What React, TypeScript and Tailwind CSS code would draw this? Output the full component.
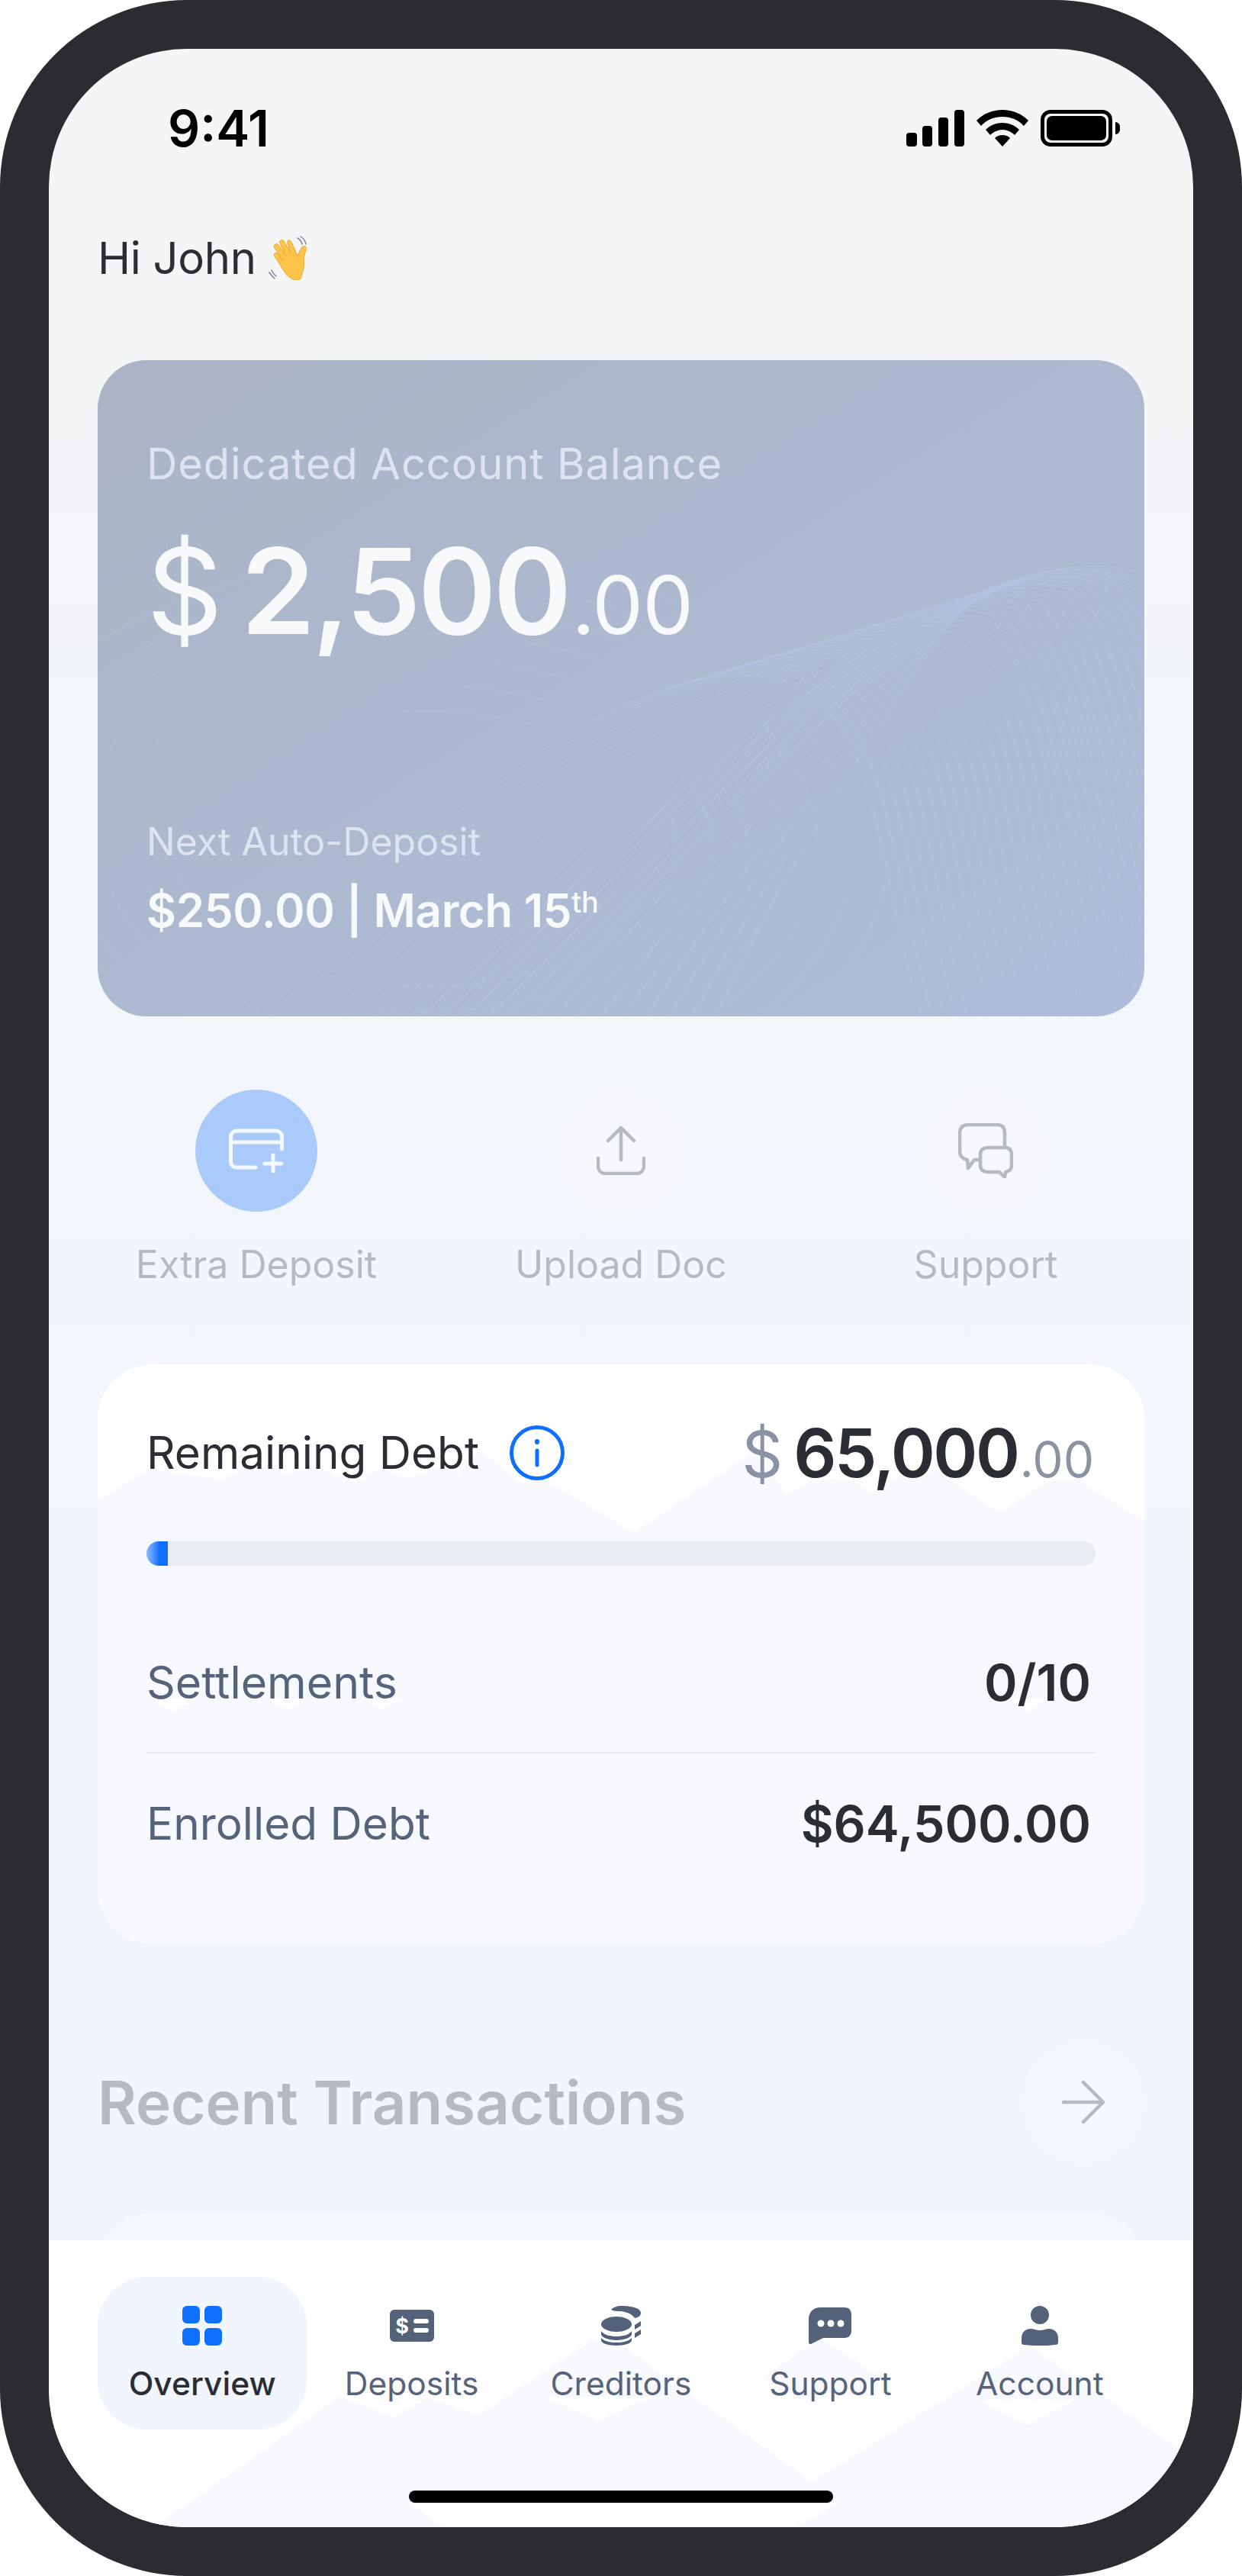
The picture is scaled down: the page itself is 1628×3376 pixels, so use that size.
import type { ReactNode } from 'react';

// thin line mesh on the balance card
const meshA = Array.from({ length: 30 }, (_, i) => {
  const top = 840 + i * 15;
  const y = 413 - (top - 840) * 0.32;
  const foot = top - 700;
  return `M${foot} 860 C${foot + 220} 640 ${top - 190} ${y + 6} ${top} ${y} S${top + 170} ${y + 220} ${top + 240} 860`;
});
const meshB = Array.from({ length: 14 }, (_, i) => {
  const top = 1274 - i * 10;
  const y = 272 + i * 3;
  return `M${420 + i * 30} 860 C${700 + i * 16} 640 ${1010 + i * 8} ${y + 30} ${top} ${y} S${top + 120} ${y + 260} ${top + 220} 860`;
});
const ripples = [0, 1, 2, 3, 4, 5, 6];

function CardMesh() {
  return (
    <svg className="absolute inset-0 h-full w-full" viewBox="0 0 1372 860" fill="none">
      {meshA.map((d) => (
        <path key={d} d={d} stroke="#b6c6e4" strokeOpacity="0.38" strokeWidth="1.5" />
      ))}
      {meshB.map((d) => (
        <path key={d} d={d} stroke="#b6c6e4" strokeOpacity="0.38" strokeWidth="1.5" />
      ))}
      {ripples.map((i) => (
        <ellipse key={i} cx="430" cy="640" rx={330 + i * 46} ry={180 + i * 34} stroke="#b6c6e4" strokeOpacity="0.18" strokeWidth="2" />
      ))}
    </svg>
  );
}

function Wave() {
  return (
    <svg className="ml-[16px] h-[58px] w-[59px]" viewBox="0 0 59 58" fill="none">
      <g stroke="#7b8494" strokeWidth="1.5" strokeLinecap="round">
        <path d="M38 3q5 3 6 8" />
        <path d="M42 1q6 4 7 10" />
        <path d="M4 45q2 5 6 8" />
        <path d="M1 48q3 5 7 8" />
      </g>
      <path
        d="M37 58c-6 0-11-4-15-9L8 27c-1-2-1-3 0-4s3-1 4 1l7 9-11-17c-1-2-1-4 1-5s3 0 4 1l10 15-8-17c-1-2-1-3 1-4s3-1 4 1l9 15-4-12c-1-2 0-4 1-4s3 0 4 2l8 18 5-10c1-2 3-3 5-2s2 2 1 4l-3 12c1 8 0 16-3 23-1 4-3 7-6 7z"
        fill="#fcc44a"
        stroke="#eba92f"
        strokeWidth="1"
      />
    </svg>
  );
}

function StatusIcons() {
  return (
    <div className="flex items-center">
      <svg className="h-[48px] w-[76px]" viewBox="0 0 76 48" fill="#000">
        <rect x="0" y="30" width="14" height="18" rx="4" />
        <rect x="21" y="21" width="13" height="27" rx="4" />
        <rect x="42" y="10" width="13" height="38" rx="4" />
        <rect x="63" y="0" width="13" height="48" rx="4" />
      </svg>
      <svg className="ml-[16px] h-[48px] w-[68px]" viewBox="0 0 68 48" fill="#000">
        <path d="M34 0c13 0 25 5 34 14l-6 7C55 13 45 9 34 9S13 13 6 21l-6-7C9 5 21 0 34 0z" />
        <path d="M34 17c8 0 16 3 22 9l-6 7c-4-4-10-7-16-7s-12 3-16 7l-6-7c6-6 14-9 22-9z" />
        <path d="M34 33c4 0 7 1 10 4L34 48 24 37c3-3 6-4 10-4z" />
      </svg>
      <div className="ml-[16px] h-[48px] w-[94px] rounded-[13px] border-[5px] border-black p-[3px]">
        <div className="h-full w-full rounded-[7px] bg-black" />
      </div>
      <div className="ml-[4px] h-[16px] w-[6px] rounded-r-full bg-black" />
    </div>
  );
}

function QuickAction({ label, active, children }: { label: string; active?: boolean; children: ReactNode }) {
  return (
    <div className="flex w-[416px] flex-col items-center">
      <div className={`flex h-[160px] w-[160px] items-center justify-center rounded-full ${active ? 'bg-[#a9cafb]' : 'bg-[#f5f7fc]'}`}>
        {children}
      </div>
      <span className="mt-[34px] text-[50px] leading-[70px] text-[#b5b9c2]">{label}</span>
    </div>
  );
}

function DebtBackdrop() {
  return (
    <svg className="absolute inset-0 h-full w-full" viewBox="0 0 1372 760" preserveAspectRatio="none">
      <polygon
        fill="#f7f9fe"
        points="0,180 67,137 100,142 163,151 192,137 225,134 250,144 285,134 339,155 370,137 411,149 445,134 473,142 500,112 560,159 580,148 703,220 859,115 904,170 935,152 985,150 1016,169 1043,150 1100,140 1181,194 1252,150 1284,152 1372,205 1372,760 0,760"
      />
      <g fill="#ffffff">
        <polygon points="70,438 99,456 128,438" />
        <polygon points="222,438 250,454 278,438" />
        <polygon points="345,438 373,452 401,438" />
        <polygon points="1195,438 1220,456 1245,438" />
      </g>
    </svg>
  );
}

function NavBackdrop() {
  return (
    <svg className="absolute inset-0 h-full w-full" viewBox="62 630 1444 802" preserveAspectRatio="none">
      <polygon
        fill="#f7f9fe"
        points="195,1432 430,1065 497,1125 540,1070 603,1120 750,905 790,930 1025,1305 1300,925 1506,1240 1506,1432"
      />
      <polygon fill="#f7f9fe" points="965,1010 1035,905 1115,1015 1090,1060 985,1060" />
      <g fill="#ffffff">
        <polygon points="690,1070 755,1135 820,1070" />
        <polygon points="1235,1075 1297,1145 1360,1075" />
        <polygon points="515,1360 1060,1360 1005,1432 560,1432" />
      </g>
    </svg>
  );
}

function OverviewIcon() {
  return (
    <svg className="h-[52px] w-[52px]" viewBox="0 0 52 52" fill="#0f6fff">
      <rect x="0" y="0" width="23" height="23" rx="6" />
      <rect x="29" y="0" width="23" height="23" rx="6" />
      <rect x="0" y="29" width="23" height="23" rx="6" />
      <rect x="29" y="29" width="23" height="23" rx="6" />
    </svg>
  );
}

function DepositsIcon() {
  return (
    <svg className="h-[42px] w-[58px]" viewBox="0 0 58 42">
      <rect width="58" height="42" rx="6" fill="#536179" />
      <text x="16" y="31" textAnchor="middle" fontSize="27" fontWeight="700" fill="#fff" fontFamily="Inter, sans-serif">$</text>
      <rect x="31" y="12" width="20" height="6" rx="3" fill="#fff" />
      <rect x="31" y="24" width="20" height="6" rx="3" fill="#fff" />
    </svg>
  );
}

function CreditorsIcon() {
  return (
    <svg className="h-[52px] w-[52px]" viewBox="0 0 52 52" fill="#536179">
      <path d="M13 5c2-3 8-5 14-5 12 0 25 3 25 9 0 4-3 6-8 7-3-5-10-8-18-9-5 0-10 0-13-2z" />
      <ellipse cx="20" cy="24" rx="20" ry="10" />
      <path d="M0 33c4 5 11 7 20 7s16-2 20-7v4c0 4-9 8-20 8S0 41 0 37z" />
      <path d="M0 42c4 4 11 6 20 6s16-2 20-6v3c0 4-9 7-20 7S0 49 0 45z" />
      <path d="M44 25l8-5v6l-8 5zM44 36l8-5v6l-8 5z" />
    </svg>
  );
}

function SupportIcon() {
  return (
    <svg className="h-[48px] w-[56px]" viewBox="0 0 56 48">
      <path
        d="M16 0h30c7 0 10 3 10 10v20c0 6-3 10-9 10H19L5 47c-3 2-5 1-5-2V16C0 6 6 0 16 0z"
        fill="#536179"
      />
      <circle cx="16" cy="21" r="4.5" fill="#fff" />
      <circle cx="29" cy="21" r="4.5" fill="#fff" />
      <circle cx="42" cy="21" r="4.5" fill="#fff" />
    </svg>
  );
}

function AccountIcon() {
  return (
    <svg className="h-[52px] w-[48px]" viewBox="0 0 48 52" fill="#536179">
      <ellipse cx="24" cy="12" rx="12" ry="12" />
      <path d="M0 42c0-8 6-12 12-12 4 0 7 2 12 2s8-2 12-2c6 0 12 4 12 12v5c0 3-1 4-4 4-7 1-13 1-20 1s-13 0-20-1c-3 0-4-1-4-4z" />
    </svg>
  );
}

const tabs = [
  { label: 'Overview', icon: <OverviewIcon /> },
  { label: 'Deposits', icon: <DepositsIcon /> },
  { label: 'Creditors', icon: <CreditorsIcon /> },
  { label: 'Support', icon: <SupportIcon /> },
  { label: 'Account', icon: <AccountIcon /> },
];

export default function App() {
  return (
    <div className="h-[3376px] w-[1628px] bg-white font-[Inter,sans-serif]">
      <div className="h-full w-full rounded-[245px] bg-[#2b2c31] p-[64px]">
        <div className="flex h-full flex-col overflow-hidden rounded-[181px] bg-gradient-to-b from-[#f4f5f7] from-10% via-[#f3f7fc] via-40% to-[#f0f5fe] to-80%">
          <div className="min-h-0 flex-1 overflow-hidden">
            {/* status bar */}
            <div className="flex h-[208px] items-center justify-between pl-[156px] pr-[96px]">
              <span className="text-[66px] font-semibold leading-none text-black">9:41</span>
              <StatusIcons />
            </div>

            <div className="px-[64px]">
              <div className="mt-[24px] flex h-[84px] items-center text-[58px] leading-[84px] tracking-[-0.3px] text-[#2b2d35]">
                Hi John
                <Wave />
              </div>

              {/* balance card */}
              <div className="relative mt-[92px] h-[860px] overflow-hidden rounded-[64px] bg-gradient-to-br from-[#abb4c6] via-[#adb9cf] to-[#adbcda] px-[64px] pt-[96px]">
                <CardMesh />
                <div className="relative">
                  <div className="text-[56px] leading-[80px] tracking-[0.9px] text-[#dde4f0]">Dedicated Account Balance</div>
                  <div className="mt-[31px] flex items-baseline text-[156px] font-semibold leading-[192px] text-[#f8f9fb]">
                    <span className="mr-[24px] font-normal">$</span>
                    <span className="tracking-[-4px]">2,500</span>
                    <span className="ml-[4px] text-[106px] font-normal tracking-[-1px]">.00</span>
                  </div>
                  <div className="mt-[178px] text-[50px] leading-[72px] text-[#dde4f0]">Next Auto-Deposit</div>
                  <div className="mt-[18px] text-[60px] font-semibold leading-[72px] tracking-[-0.3px] text-[#f8f9fb]">
                    $250.00 | March 15<sup className="text-[38px] font-medium">th</sup>
                  </div>
                </div>
              </div>

              {/* quick actions */}
              <div className="mt-[96px] flex justify-between">
                <QuickAction label="Extra Deposit" active>
                  <svg className="h-[58px] w-[72px]" viewBox="0 0 72 58" fill="none" stroke="#f4f7fe" strokeWidth="5" strokeLinecap="round">
                    <path d="M35 51H11c-5 0-8.500-3-8.500-8V11c0-5 3.500-8 8.500-8h50c5 0 8.500 3 8.500 8v16" />
                    <path d="M2.500 18h67" />
                    <path d="M47 46h22M58 35v21" />
                  </svg>
                </QuickAction>
                <QuickAction label="Upload Doc">
                  <svg className="h-[64px] w-[64px]" viewBox="0 0 64 64" fill="none" stroke="#b5b9c2" strokeWidth="4.500" strokeLinecap="round" strokeLinejoin="round">
                    <path d="M32 44V3M15 19 32 2l17 17" />
                    <path d="M2 42v10c0 6 4 10 10 10h40c6 0 10-4 10-10V42" />
                  </svg>
                </QuickAction>
                <QuickAction label="Support">
                  <svg className="h-[72px] w-[72px]" viewBox="0 0 72 72" fill="none" stroke="#b5b9c2" strokeWidth="4.500" strokeLinecap="round" strokeLinejoin="round">
                    <path d="M27 48h-6l-8 11-1-11c-6-1-10-5-10-11V13C2 6 6 2 13 2h38c7 0 10 4 10 11v18" />
                    <path d="M39 32h22c6 0 9 3 9 9v14c0 6-3 8-8 9l-1 7-7-7H39c-6 0-10-3-10-9V41c0-6 4-9 10-9z" />
                  </svg>
                </QuickAction>
              </div>

              {/* debt card */}
              <div className="relative mt-[96px] h-[760px] overflow-hidden rounded-[72px] bg-white px-[64px] pt-[48px]">
                <DebtBackdrop />
                <div className="relative">
                  <div className="flex h-[136px] items-center justify-between">
                    <div className="flex items-center">
                      <span className="text-[58.5px] text-[#2b2d35]">Remaining Debt</span>
                      <svg className="ml-[40px] h-[72px] w-[72px]" viewBox="0 0 72 72" fill="none" stroke="#0f6fff" strokeLinecap="round">
                        <circle cx="36" cy="36" r="33.500" strokeWidth="5" />
                        <path d="M36 33v19" strokeWidth="5" />
                        <path d="M36 21v1" strokeWidth="6" />
                      </svg>
                    </div>
                    <div className="flex items-baseline pr-[2px] font-semibold text-[#2b2d35]">
                      <span className="mr-[14px] text-[84px] font-normal text-[#8a93a3]">$</span>
                      <span className="text-[88px] tracking-[-2.5px]">65,000</span>
                      <span className="ml-[2px] text-[64px] font-normal text-[#8a93a3]">.00</span>
                    </div>
                  </div>
                  <div className="mt-[48px] h-[32px] overflow-hidden rounded-full bg-[#e9ecf3]">
                    <div className="h-full w-[28px] bg-gradient-to-r from-[#8db8fb] to-[#0f6fff] to-60%" />
                  </div>
                  <div className="mt-[62px] flex h-[184px] items-center justify-between border-b-2 border-[#e9ebf1]">
                    <span className="text-[59px] text-[#55637b]">Settlements</span>
                    <span className="pr-[6px] text-[66px] font-semibold text-[#2b2d35]">0/10</span>
                  </div>
                  <div className="flex h-[184px] items-center justify-between">
                    <span className="text-[58.5px] text-[#55637b]">Enrolled Debt</span>
                    <span className="pr-[6px] text-[66px] font-semibold text-[#2b2d35]">$64,500.00</span>
                  </div>
                </div>
              </div>

              {/* recent transactions */}
              <div className="mt-[127px] flex items-center justify-between">
                <span className="text-[78px] font-semibold text-[#b5b9c2]">Recent Transactions</span>
                <div className="flex h-[160px] w-[160px] items-center justify-center rounded-full bg-[#f4f7fd]">
                  <svg className="h-[56px] w-[56px]" viewBox="0 0 56 56" fill="none" stroke="#b5b9c2" strokeWidth="4.500" strokeLinecap="round" strokeLinejoin="round">
                    <path d="M2 28h52M28 2l26 26-26 26" />
                  </svg>
                </div>
              </div>

              <div className="mt-[65px] h-[120px] rounded-t-[72px] bg-[#f5f8fe]" />
            </div>
          </div>

          {/* bottom nav */}
          <div className="relative h-[376px] bg-white">
            <NavBackdrop />
            <div className="relative grid grid-cols-5 px-[64px] pt-[48px]">
              {tabs.map((tab, i) => (
                <div
                  key={tab.label}
                  className={`flex h-[200px] flex-col items-center rounded-[64px] pt-[38px] ${i === 0 ? 'bg-[#f0f5fe]' : ''}`}
                >
                  <div className="flex h-[52px] items-center justify-center">{tab.icon}</div>
                  <span className={`mt-[20px] text-[42.5px] leading-[60px] ${i === 0 ? 'font-medium text-[#2b2d35]' : 'text-[#55637b]'}`}>
                    {tab.label}
                  </span>
                </div>
              ))}
            </div>
            <div className="absolute bottom-[32px] left-[472px] h-[16px] w-[556px] rounded-full bg-black" />
          </div>
        </div>
      </div>
    </div>
  );
}
